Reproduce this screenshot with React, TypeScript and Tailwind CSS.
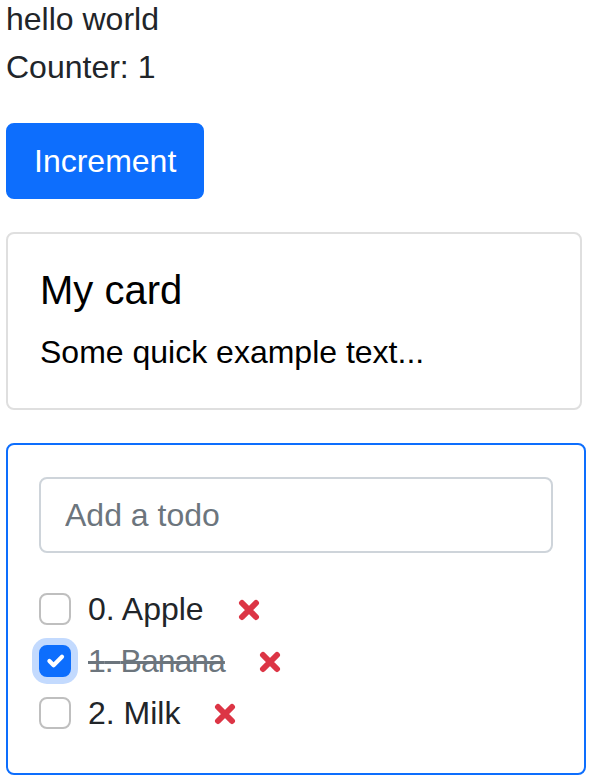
import React, { useState } from 'react';

type Todo = { id: number; text: string; done: boolean };

function RemoveIcon() {
  return (
    <svg viewBox="0 0 22 22" className="w-[22px] h-[22px]" aria-hidden="true">
      <path d="M4 4L18 18M18 4L4 18" stroke="#dc3545" strokeWidth="6" strokeLinecap="round" />
    </svg>
  );
}

function TodoRow({ todo, onToggle }: { todo: Todo; onToggle: () => void }) {
  return (
    <div className="flex items-start h-[48px] mb-[4px]">
      <button
        onClick={onToggle}
        className={`mt-[8px] w-[32px] h-[32px] shrink-0 rounded-[8px] border-2 flex items-center justify-center ${
          todo.done
            ? 'bg-[#0d6efd] border-[#0d6efd] shadow-[0_0_0_7px_#c3dafe]'
            : 'bg-white border-[#bfbfbf]'
        }`}
      >
        {todo.done && (
          <svg viewBox="0 0 20 20" className="w-[30px] h-[30px]">
            <path d="M6 10l3 3l6-6" fill="none" stroke="#fff" strokeWidth="3" strokeLinecap="round" strokeLinejoin="round" />
          </svg>
        )}
      </button>
      <span className={`ml-[17px] ${todo.done ? 'line-through text-[#6c757d] tracking-[-1px]' : ''}`}>
        {todo.id}. {todo.text}
      </span>
      <span className="ml-[34px] mt-[14px] cursor-pointer">
        <RemoveIcon />
      </span>
    </div>
  );
}

export default function App() {
  const [count, setCount] = useState(1);
  const [todos, setTodos] = useState<Todo[]>([
    { id: 0, text: 'Apple', done: false },
    { id: 1, text: 'Banana', done: true },
    { id: 2, text: 'Milk', done: false },
  ]);

  const toggle = (id: number) =>
    setTodos(todos.map(t => (t.id === id ? { ...t, done: !t.done } : t)));

  return (
    <div className="min-h-screen bg-white pl-[6px] pr-[7px] font-['Liberation_Sans',Arial,sans-serif] text-[32px] leading-[48px] text-[#212529]">
      <div className="mt-[-5px]">hello world</div>
      <div>Counter: {count}</div>

      <button
        onClick={() => setCount(count + 1)}
        className="mt-[32px] h-[76px] px-[26px] rounded-[8px] bg-[#0d6efd] border-2 border-[#0d6efd] text-white"
      >
        Increment
      </button>

      {/* Card */}
      <div className="mt-[33px] w-[576px] border-2 border-[#dfdfdf] rounded-[8px] p-[32px] text-black">
        <div className="text-[40px] leading-[48px] font-medium mb-[14px]">My card</div>
        <div>Some quick example text...</div>
      </div>

      {/* Todo list */}
      <div className="mt-[33px] border-2 border-[#0d6efd] rounded-[8px] px-[31px] pt-[32px] pb-[32px]">
        <input
          placeholder="Add a todo"
          className="block w-full h-[76px] px-[24px] border-2 border-[#ced4da] rounded-[8px] outline-none placeholder:text-[#6c757d] mb-[32px]"
        />
        {todos.map(t => (
          <TodoRow key={t.id} todo={t} onToggle={() => toggle(t.id)} />
        ))}
      </div>
    </div>
  );
}
